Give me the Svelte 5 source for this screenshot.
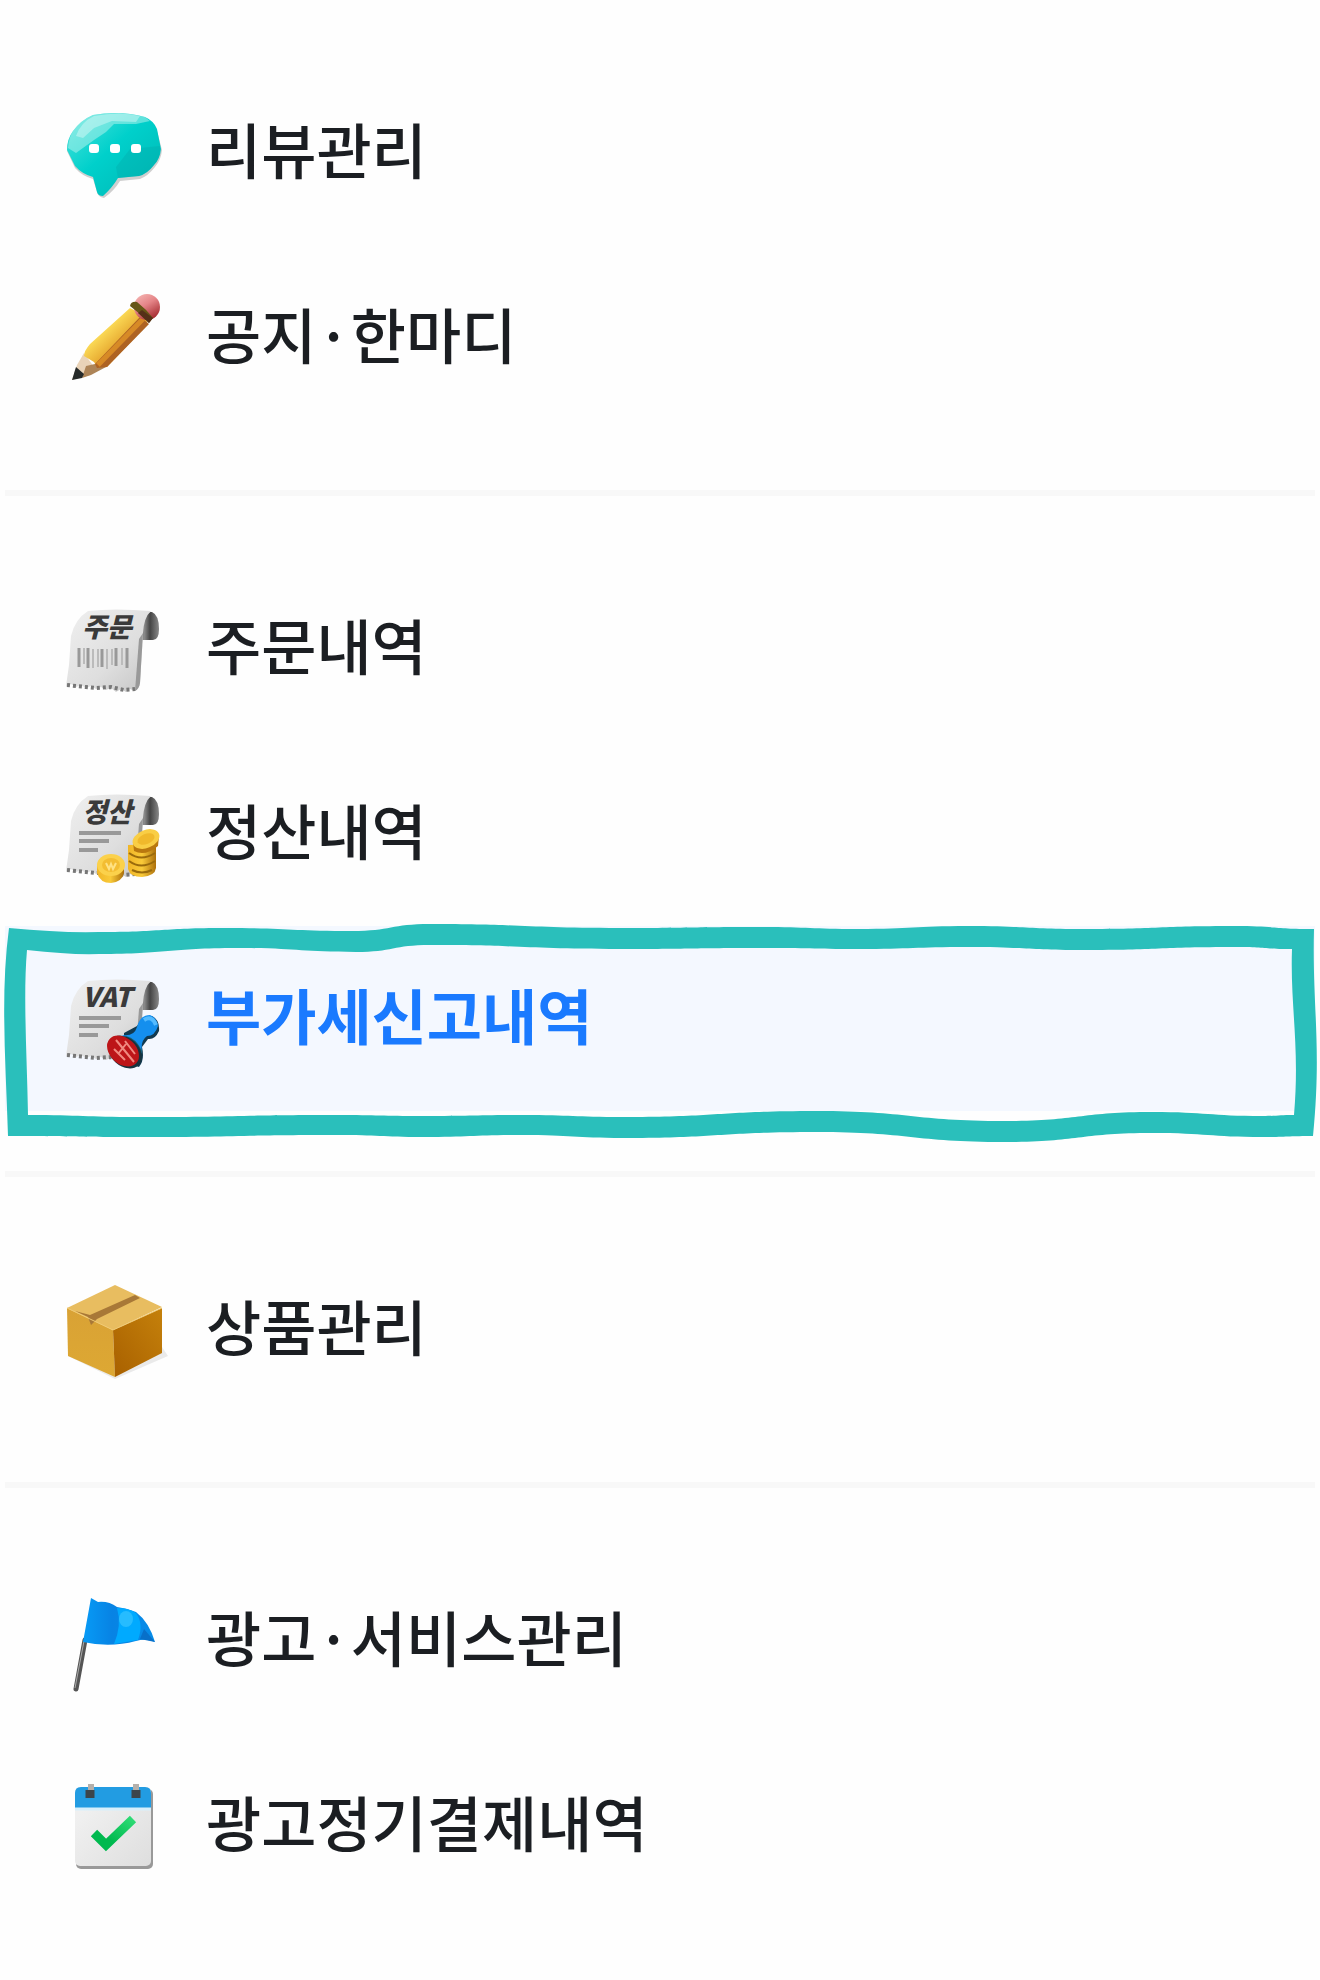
<script lang="ts">
  type Item = { id: string; label: string };
  type Point = [number, number];

  const groups: Item[][] = [
    [
      { id: 'review', label: '리뷰관리' },
      { id: 'notice', label: '공지·한마디' }
    ],
    [
      { id: 'orders', label: '주문내역' },
      { id: 'settlement', label: '정산내역' },
      { id: 'vat', label: '부가세신고내역' }
    ],
    [{ id: 'products', label: '상품관리' }],
    [
      { id: 'ads', label: '광고·서비스관리' },
      { id: 'billing', label: '광고정기결제내역' }
    ]
  ];

  let active = $state('vat');

  // smooth line through the points, flat at each of them
  function wave(points: Point[]) {
    return points
      .slice(1)
      .map(([x, y], i) => {
        const [px, py] = points[i];
        const mid = Math.round((px + x) / 2);
        return `C${mid} ${py} ${mid} ${y} ${x} ${y}`;
      })
      .join('');
  }

  const outerTop: Point[] = [[99, 6], [225, 2], [352, 5], [430, -2], [620, 2], [761, 1], [858, 3], [968, 0], [1083, 3], [1235, 0], [1314, 3]];
  const outerBottom: Point[] = [[1313, 210], [1263, 211], [1152, 207], [1005, 216], [816, 206], [623, 212], [522, 209], [423, 211], [336, 209], [138, 211], [8, 210]];
  const innerTop: Point[] = [[99, 28], [237, 22], [356, 26], [430, 19], [620, 23], [761, 22], [858, 23], [968, 21], [1083, 24], [1235, 21], [1292, 23]];
  const innerBottom: Point[] = [[1294, 189], [1263, 190], [1152, 186], [1005, 195], [816, 185], [623, 191], [522, 189], [423, 190], [336, 189], [138, 191], [28, 189]];

  const frame =
    `M9 2Q60 7 99 6${wave(outerTop)}C1312 80 1322 120 1313 210${wave(outerBottom)}C6 140 0 70 9 2Z` +
    `M27 24Q70 29 99 28${wave(innerTop)}C1290 80 1300 120 1294 189${wave(innerBottom)}C27 130 23 70 27 24Z`;
</script>

{#snippet receipt(title: string)}
  <path d="M80 19Q82 12 88 13Q95 16 95 30Q95 41 89 41H77Z" fill="url(#roll)" />
  <path d="M24 12Q50 9 87 12Q80 18 79 34L76 84Q75 90 71 92L66 90L62 93L57 90L52 93L47 89L42 91L37 88L32 90L27 87L22 89L17 86L12 88L7 85L2 87L5 66L7 37Q11 20 24 12Z" fill="url(#paper)" />
  <path d="M79 34L76 84Q75 90 71 92L75 40Z" fill="#999" />
  <path d="M3 86L12 87L22 88L32 89L47 88L60 91L71 90" fill="none" stroke="#777" stroke-width="4" stroke-dasharray="3 3" />
  <text x="43" y="38" class="stamp" text-anchor="middle">{title}</text>
{/snippet}

{#snippet lines()}
  <path d="M15 49H57M15 57H45M15 66H34" stroke="#999" stroke-width="4" />
{/snippet}

{#snippet icon(id: string)}
  <svg class="icon" viewBox="0 0 100 100" aria-hidden="true">
    {#if id === 'review'}
      <path d="M29 14Q56 8 81 16Q90 20 93 28L98 47Q97 57 91 64Q84 73 76 76L56 78Q50 88 40 95Q34 94 33 89L29 76Q18 73 11 65L3 48Q3 37 9 29Q17 18 29 14Z" fill="#777" opacity="0.35" />
      <path d="M29 12Q56 7 81 14Q90 18 93 26L97 46Q96 56 90 62Q83 71 75 73L54 75Q48 85 39 93Q34 93 33 89L29 74Q18 71 11 63L3 47Q3 36 9 28Q17 17 29 12Z" fill="url(#bubble)" />
      <path d="M29 12Q56 7 81 14L86 18L72 21L50 21L42 29L30 37L12 50L4 45Q5 34 9 28Q17 17 29 12Z" fill="#b9f4ee" opacity="0.5" />
      <path d="M30 13Q56 8 76 13L72 19L48 18L30 25L19 35L12 33Q17 19 30 13Z" fill="#fff" opacity="0.35" />
      <path d="M96 43L66 46L52 64L54 75L75 73Q83 71 90 62Q97 54 96 43Z" fill="#00aaa9" opacity="0.35" />
      <rect x="25" y="41" width="10" height="9" rx="3" fill="#fff" />
      <rect x="46" y="41" width="10" height="9" rx="3" fill="#fff" />
      <rect x="67" y="41" width="10" height="9" rx="3" fill="#fff" />
    {:else if id === 'notice'}
      <path d="M8 92L13 77L20 65L30 79L26 87Z" fill="#e9d3b8" />
      <path d="M18 90L22 78L31 76L42 79L27 87Z" fill="#ad8457" />
      <path d="M8 92L12 79L20 86L18 90Z" fill="#262a2a" />
      <path d="M66 20L26 56Q20 63 20 68L30 74L33 79L43 79L84 36L80 27Z" fill="url(#pencil)" />
      <path d="M76 29L31 76L33 80L43 79L85 36Z" fill="#ae6323" />
      <path d="M79 31L34 77" stroke="#d78a26" stroke-width="5" />
      <circle cx="83" cy="19" r="13" fill="url(#eraser)" />
      <path d="M66 18Q67 13 73 14Q82 21 89 30L85 35Q77 26 66 18Z" fill="#665616" />
      <path d="M78 22L89 30L85 35L74 25Z" fill="#553018" />
    {:else if id === 'orders'}
      {@render receipt('주문')}
      <path d="M15 49V68M24 49V69M38 50V68M52 49V67M63 49V69" stroke="#999" stroke-width="3" />
      <path d="M20 49V65M29 50V69M34 50V68M43 50V70M48 50V66M58 49V66" stroke="#bbb" stroke-width="2" />
    {:else if id === 'settlement'}
      {@render receipt('정산')}
      {@render lines()}
      <path d="M64 61V85Q66 93 78 93Q91 92 92 84V60Z" fill="url(#coin)" />
      <path d="M65 69Q77 78 91 69M65 77Q77 86 91 77M68 86Q78 91 88 86" fill="none" stroke="#9a6b0c" stroke-width="2" />
      <path d="M69 58L70 67Q81 73 94 62L95 52Z" fill="#b9780f" />
      <ellipse cx="82" cy="55" rx="14" ry="9" fill="#f9ce45" transform="rotate(-22 82 55)" />
      <ellipse cx="82" cy="55" rx="9" ry="5" fill="#f0b92c" transform="rotate(-22 82 55)" />
      <path d="M33 81V89Q36 99 47 99Q58 98 60 89V81Z" fill="url(#coin)" />
      <ellipse cx="47" cy="81" rx="14" ry="11" fill="#fbd14b" />
      <ellipse cx="47" cy="81" rx="9" ry="7" fill="#f3bd32" />
      <path d="M42 79L45 85L47 80L49 85L52 79" fill="none" stroke="#ffe283" stroke-width="2" />
    {:else if id === 'vat'}
      {@render receipt('VAT')}
      {@render lines()}
      <path d="M60 64L73 57Q80 46 88 47Q96 51 95 62Q91 71 84 70L78 78Q81 91 75 98L60 93Z" fill="#123a50" />
      <path d="M58 66Q70 68 73 58Q76 46 86 46Q93 49 94 57Q91 67 83 67Q76 72 78 84Z" fill="#148fee" />
      <path d="M62 67Q72 69 78 82L76 90L58 70Z" fill="#17606e" />
      <path d="M80 51Q88 46 92 56" fill="none" stroke="#54bbff" stroke-width="4" />
      <ellipse cx="61" cy="83" rx="19" ry="14" fill="#17333e" transform="rotate(42 61 83)" />
      <ellipse cx="59" cy="82" rx="18" ry="13" fill="#bd1518" transform="rotate(42 59 82)" />
      <path d="M52 71L70 93M50 80L61 91M54 85L62 75M61 72L71 85" stroke="#f08a80" stroke-width="2" />
    {:else if id === 'products'}
      <path d="M4 76L51 99L104 76L98 67Z" fill="#999" opacity="0.2" />
      <path d="M3 28L51 5L98 27L49 50Z" fill="#e8bd60" />
      <path d="M3 28L49 50L51 97L4 76Z" fill="url(#box)" />
      <path d="M49 50L98 28V73L51 97Z" fill="url(#boxside)" />
      <path d="M71 15L76 18L33 39L27 45L24 37L11 31L26 35Z" fill="#a87837" />
      <path d="M3 28L49 50L98 28" fill="none" stroke="#f0ca73" stroke-width="1" />
    {:else if id === 'ads'}
      <path d="M21 49L12 98" stroke="#555" stroke-width="5" stroke-linecap="round" />
      <path d="M20 50L11 97" stroke="#aaa" stroke-width="1" />
      <path d="M27 7L34 11Q45 10 53 16Q62 17 72 21Q85 31 91 51Q82 47 72 50Q46 57 19 51Z" fill="url(#flag)" />
      <path d="M53 17Q65 17 72 22Q80 33 74 49L50 53Q58 34 53 17Z" fill="#00aaff" />
      <ellipse cx="62" cy="28" rx="7" ry="8" fill="#36c3ff" opacity="0.7" />
      <path d="M80 38L91 51L76 48Z" fill="#0870c9" />
    {:else if id === 'billing'}
      <rect x="12" y="13" width="77" height="80" rx="5" fill="#999" />
      <rect x="11" y="11" width="76" height="79" rx="5" fill="url(#sheet)" />
      <path d="M11 32V17Q11 11 17 11H81Q87 11 87 17V32Z" fill="#229ce2" />
      <path d="M11 33H87" stroke="#d7effb" stroke-width="3" />
      <path d="M27 8V18M72 8V18" stroke="#b5b0ab" stroke-width="6" />
      <path d="M26 14V22M72 14V22" stroke="#3c454b" stroke-width="9" />
      <path d="M30 57L42 69L69 43" fill="none" stroke="url(#check)" stroke-width="9" />
    {/if}
  </svg>
{/snippet}

<svg class="defs" aria-hidden="true">
  <defs>
    <linearGradient id="bubble" x1="0" y1="0" x2="1" y2="1">
      <stop offset="0" stop-color="#4ee5dd" />
      <stop offset="0.45" stop-color="#00d0cb" />
      <stop offset="1" stop-color="#00b6b3" />
    </linearGradient>
    <linearGradient id="pencil" x1="0" y1="0" x2="1" y2="1">
      <stop offset="0.3" stop-color="#ffe45e" />
      <stop offset="0.6" stop-color="#e5a42c" />
    </linearGradient>
    <linearGradient id="eraser" x1="0" y1="0" x2="0.6" y2="1">
      <stop offset="0.1" stop-color="#f4b1ae" />
      <stop offset="0.5" stop-color="#e58588" />
      <stop offset="1" stop-color="#a93035" />
    </linearGradient>
    <linearGradient id="paper" x1="0" y1="0" x2="1" y2="1">
      <stop offset="0" stop-color="#f0f0f0" />
      <stop offset="0.6" stop-color="#dedede" />
      <stop offset="1" stop-color="#c4c4c4" />
    </linearGradient>
    <linearGradient id="roll" x1="0" y1="0" x2="1" y2="0">
      <stop offset="0.2" stop-color="#888" />
      <stop offset="0.5" stop-color="#444" />
      <stop offset="1" stop-color="#888" />
    </linearGradient>
    <linearGradient id="coin" x1="0" y1="0" x2="1" y2="0">
      <stop offset="0" stop-color="#f0b527" />
      <stop offset="0.5" stop-color="#f9ca39" />
      <stop offset="1" stop-color="#ad700b" />
    </linearGradient>
    <linearGradient id="box" x1="0" y1="0" x2="0" y2="1">
      <stop offset="0" stop-color="#d9a235" />
      <stop offset="1" stop-color="#dda833" />
    </linearGradient>
    <linearGradient id="boxside" x1="0" y1="1" x2="1" y2="0">
      <stop offset="0" stop-color="#a86000" />
      <stop offset="1" stop-color="#c5810b" />
    </linearGradient>
    <linearGradient id="flag" x1="0" y1="0" x2="1" y2="0">
      <stop offset="0" stop-color="#079bf6" />
      <stop offset="0.4" stop-color="#0783e4" />
      <stop offset="1" stop-color="#078ce8" />
    </linearGradient>
    <linearGradient id="sheet" x1="0" y1="0" x2="1" y2="1">
      <stop offset="0.2" stop-color="#f0f0f0" />
      <stop offset="1" stop-color="#dedede" />
    </linearGradient>
    <linearGradient id="check" x1="0" y1="1" x2="1" y2="0">
      <stop offset="0.3" stop-color="#00b94f" />
      <stop offset="1" stop-color="#2edb75" />
    </linearGradient>
  </defs>
</svg>

<nav class="menu">
  {#each groups as group}
    <ul class="group">
      {#each group as item (item.id)}
        <li>
          <a
            href="#{item.id}"
            class="item"
            class:active={active === item.id}
            aria-current={active === item.id ? 'page' : undefined}
            onclick={() => (active = item.id)}
          >
            {@render icon(item.id)}
            <span class="label">{item.label}</span>
            {#if active === item.id}
              <svg class="frame" viewBox="0 0 1320 220" preserveAspectRatio="none" aria-hidden="true">
                <path d={frame} fill="#2abfbb" fill-rule="evenodd" />
              </svg>
            {/if}
          </a>
        </li>
      {/each}
    </ul>
  {/each}
</nav>

<style>
  :global(body) {
    margin: 0;
    background: #fefefe;
  }
  .defs {
    position: absolute;
    width: 0;
    height: 0;
  }
  .menu {
    font-family: 'Noto Sans CJK KR', sans-serif;
    overflow-x: hidden;
  }
  .group {
    list-style: none;
    margin: 0 5px;
    padding: 60px 0;
  }
  .group + .group { border-top: 6px solid #f8f8f8; }
  .item {
    position: relative;
    display: flex;
    align-items: center;
    gap: 42px;
    height: 185px;
    padding: 0 59px;
    box-sizing: border-box;
    color: #1b1e22;
    text-decoration: none;
  }
  .icon {
    width: 100px;
    height: 100px;
    flex-shrink: 0;
    overflow: visible;
  }
  .label {
    padding-bottom: 10px;
    font-size: 60px;
    line-height: 88px;
    font-weight: 500;
    white-space: nowrap;
  }
  .active {
    background: #f4f8ff;
    color: #1a7aff;
  }
  .active .label { font-weight: 700; }
  .stamp {
    font-size: 27px;
    font-weight: 900;
    font-style: italic;
    fill: #3a3a3a;
  }
  .frame {
    position: absolute;
    top: 0;
    left: -5px;
    width: calc(100% + 10px);
    height: 220px;
    overflow: visible;
    pointer-events: none;
  }
</style>
